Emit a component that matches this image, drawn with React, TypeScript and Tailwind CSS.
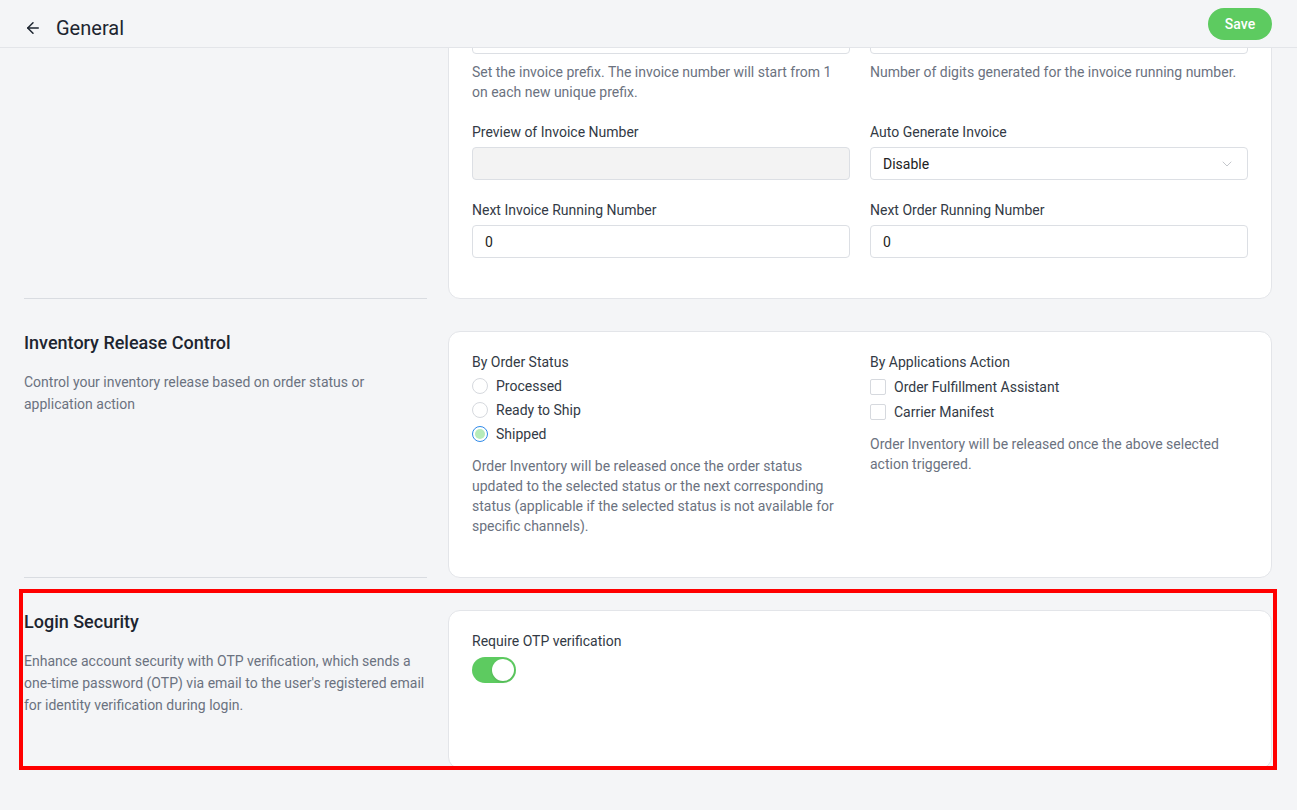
import { ArrowLeft, ChevronDown } from "lucide-react";

const labelCls = "block text-sm leading-5 text-[#333a45] mb-[5px]";
const inputCls = "h-[33px] w-full rounded border border-[#dcdfe4] bg-white px-3 text-sm text-[#222] flex items-center";
const helpCls = "mt-2 text-sm leading-5 text-[#6b7280]";

function Radio({ label, checked }: { label: string; checked?: boolean }) {
  return (
    <label className="flex h-6 items-center gap-2 text-sm text-[#333a45]">
      {checked ? (
        <span className="flex h-4 w-4 items-center justify-center rounded-full border border-[#2f8ae8] bg-white">
          <span className="h-[10px] w-[10px] rounded-full bg-[#b7ebb9]" />
        </span>
      ) : (
        <span className="h-4 w-4 rounded-full border border-[#d6d9de] bg-white" />
      )}
      {label}
    </label>
  );
}

function Checkbox({ label }: { label: string }) {
  return (
    <label className="flex h-[25px] items-center gap-2 text-sm text-[#333a45]">
      <span className="h-4 w-4 rounded-[2px] border border-[#d6d9de] bg-white" />
      {label}
    </label>
  );
}

function Section({ title, desc, last, children }: { title?: string; desc?: string; last?: boolean; children: React.ReactNode }) {
  return (
    <div className="grid grid-cols-[403px_1fr] gap-x-[21px]">
      <div className={last ? "" : "border-b border-[#d9dce1]"}>
        {title && (
          <>
            <h2 className="text-lg leading-6 font-medium text-[#1d2530]">{title}</h2>
            <p className="mt-4 text-sm leading-[22px] text-[#6b7280]">{desc}</p>
          </>
        )}
      </div>
      <div className="rounded-xl border border-[#e3e5e9] bg-white">{children}</div>
    </div>
  );
}

export default function App() {
  return (
    <div className="h-[810px] overflow-hidden bg-[#f4f5f7]" style={{ fontFamily: "Roboto, 'Liberation Sans', sans-serif" }}>
      <header className="relative z-10 flex h-12 items-center justify-between border-b border-[#e3e5e9] bg-[#f4f5f7] pl-6 pr-[25px]">
        <div className="flex items-center gap-[14px] pt-2">
          <ArrowLeft className="h-[18px] w-[18px] text-[#1d2530]" strokeWidth={2} />
          <h1 className="text-xl text-[#1d2530]">General</h1>
        </div>
        <button className="h-8 w-16 rounded-full bg-[#5dcb60] text-sm font-medium text-white">Save</button>
      </header>

      <main className="h-[762px] overflow-hidden px-6 pr-[25px]">
        <div className="-mt-[77px]">
          {/* top of this card is scrolled under the header */}
          <Section>
            <div className="grid grid-cols-2 gap-x-5 gap-y-5 px-[23px] pt-6 pb-10">
              <div>
                <span className="block h-5 mb-[5px]" />
                <div className={inputCls} />
                <p className={helpCls}>
                  Set the invoice prefix. The invoice number will start from 1 on each new unique prefix.
                </p>
              </div>
              <div>
                <span className="block h-5 mb-[5px]" />
                <div className={inputCls} />
                <p className={helpCls}>Number of digits generated for the invoice running number.</p>
              </div>
              <div>
                <span className={labelCls}>Preview of Invoice Number</span>
                <div className={inputCls + " !bg-[#f3f3f3]"} />
              </div>
              <div>
                <span className={labelCls}>Auto Generate Invoice</span>
                <div className={inputCls + " justify-between"}>
                  <span>Disable</span>
                  <ChevronDown className="h-4 w-4 text-[#b8bcc2]" strokeWidth={1.25} />
                </div>
              </div>
              <div>
                <span className={labelCls}>Next Invoice Running Number</span>
                <div className={inputCls}>0</div>
              </div>
              <div>
                <span className={labelCls}>Next Order Running Number</span>
                <div className={inputCls}>0</div>
              </div>
            </div>
          </Section>

          <div className="mt-8">
            <Section
              title="Inventory Release Control"
              desc="Control your inventory release based on order status or application action"
            >
              <div className="grid grid-cols-2 gap-x-5 px-[23px] pt-5 pb-[41px]">
                <div>
                  <p className="text-sm leading-5 text-[#333a45] mb-[2px]">By Order Status</p>
                  <Radio label="Processed" />
                  <Radio label="Ready to Ship" />
                  <Radio label="Shipped" checked />
                  <p className="mt-[10px] text-sm leading-5 text-[#6b7280]">
                    Order Inventory will be released once the order status updated to the selected status or the next
                    corresponding status (applicable if the selected status is not available for specific channels).
                  </p>
                </div>
                <div>
                  <p className="text-sm leading-5 text-[#333a45] mb-[2px]">By Applications Action</p>
                  <Checkbox label="Order Fulfillment Assistant" />
                  <Checkbox label="Carrier Manifest" />
                  <p className="mt-[10px] text-sm leading-5 text-[#6b7280]">
                    Order Inventory will be released once the above selected action triggered.
                  </p>
                </div>
              </div>
            </Section>
          </div>

          <div className="relative mt-8">
            <div className="pointer-events-none absolute -left-[5px] -right-[5px] -top-[21px] -bottom-[1px] z-10 border-4 border-[#ff0000]" />
            <Section
              last
              title="Login Security"
              desc="Enhance account security with OTP verification, which sends a one-time password (OTP) via email to the user's registered email for identity verification during login."
            >
              <div className="h-[157px] px-[23px] pt-5">
                <p className="text-sm leading-5 text-[#333a45]">Require OTP verification</p>
                <div className="mt-[6px] flex h-[26px] w-11 items-center justify-end rounded-full bg-[#5dcb60] px-[2px]">
                  <span className="h-[22px] w-[22px] rounded-full bg-white shadow" />
                </div>
              </div>
            </Section>
          </div>
        </div>
      </main>
    </div>
  );
}
